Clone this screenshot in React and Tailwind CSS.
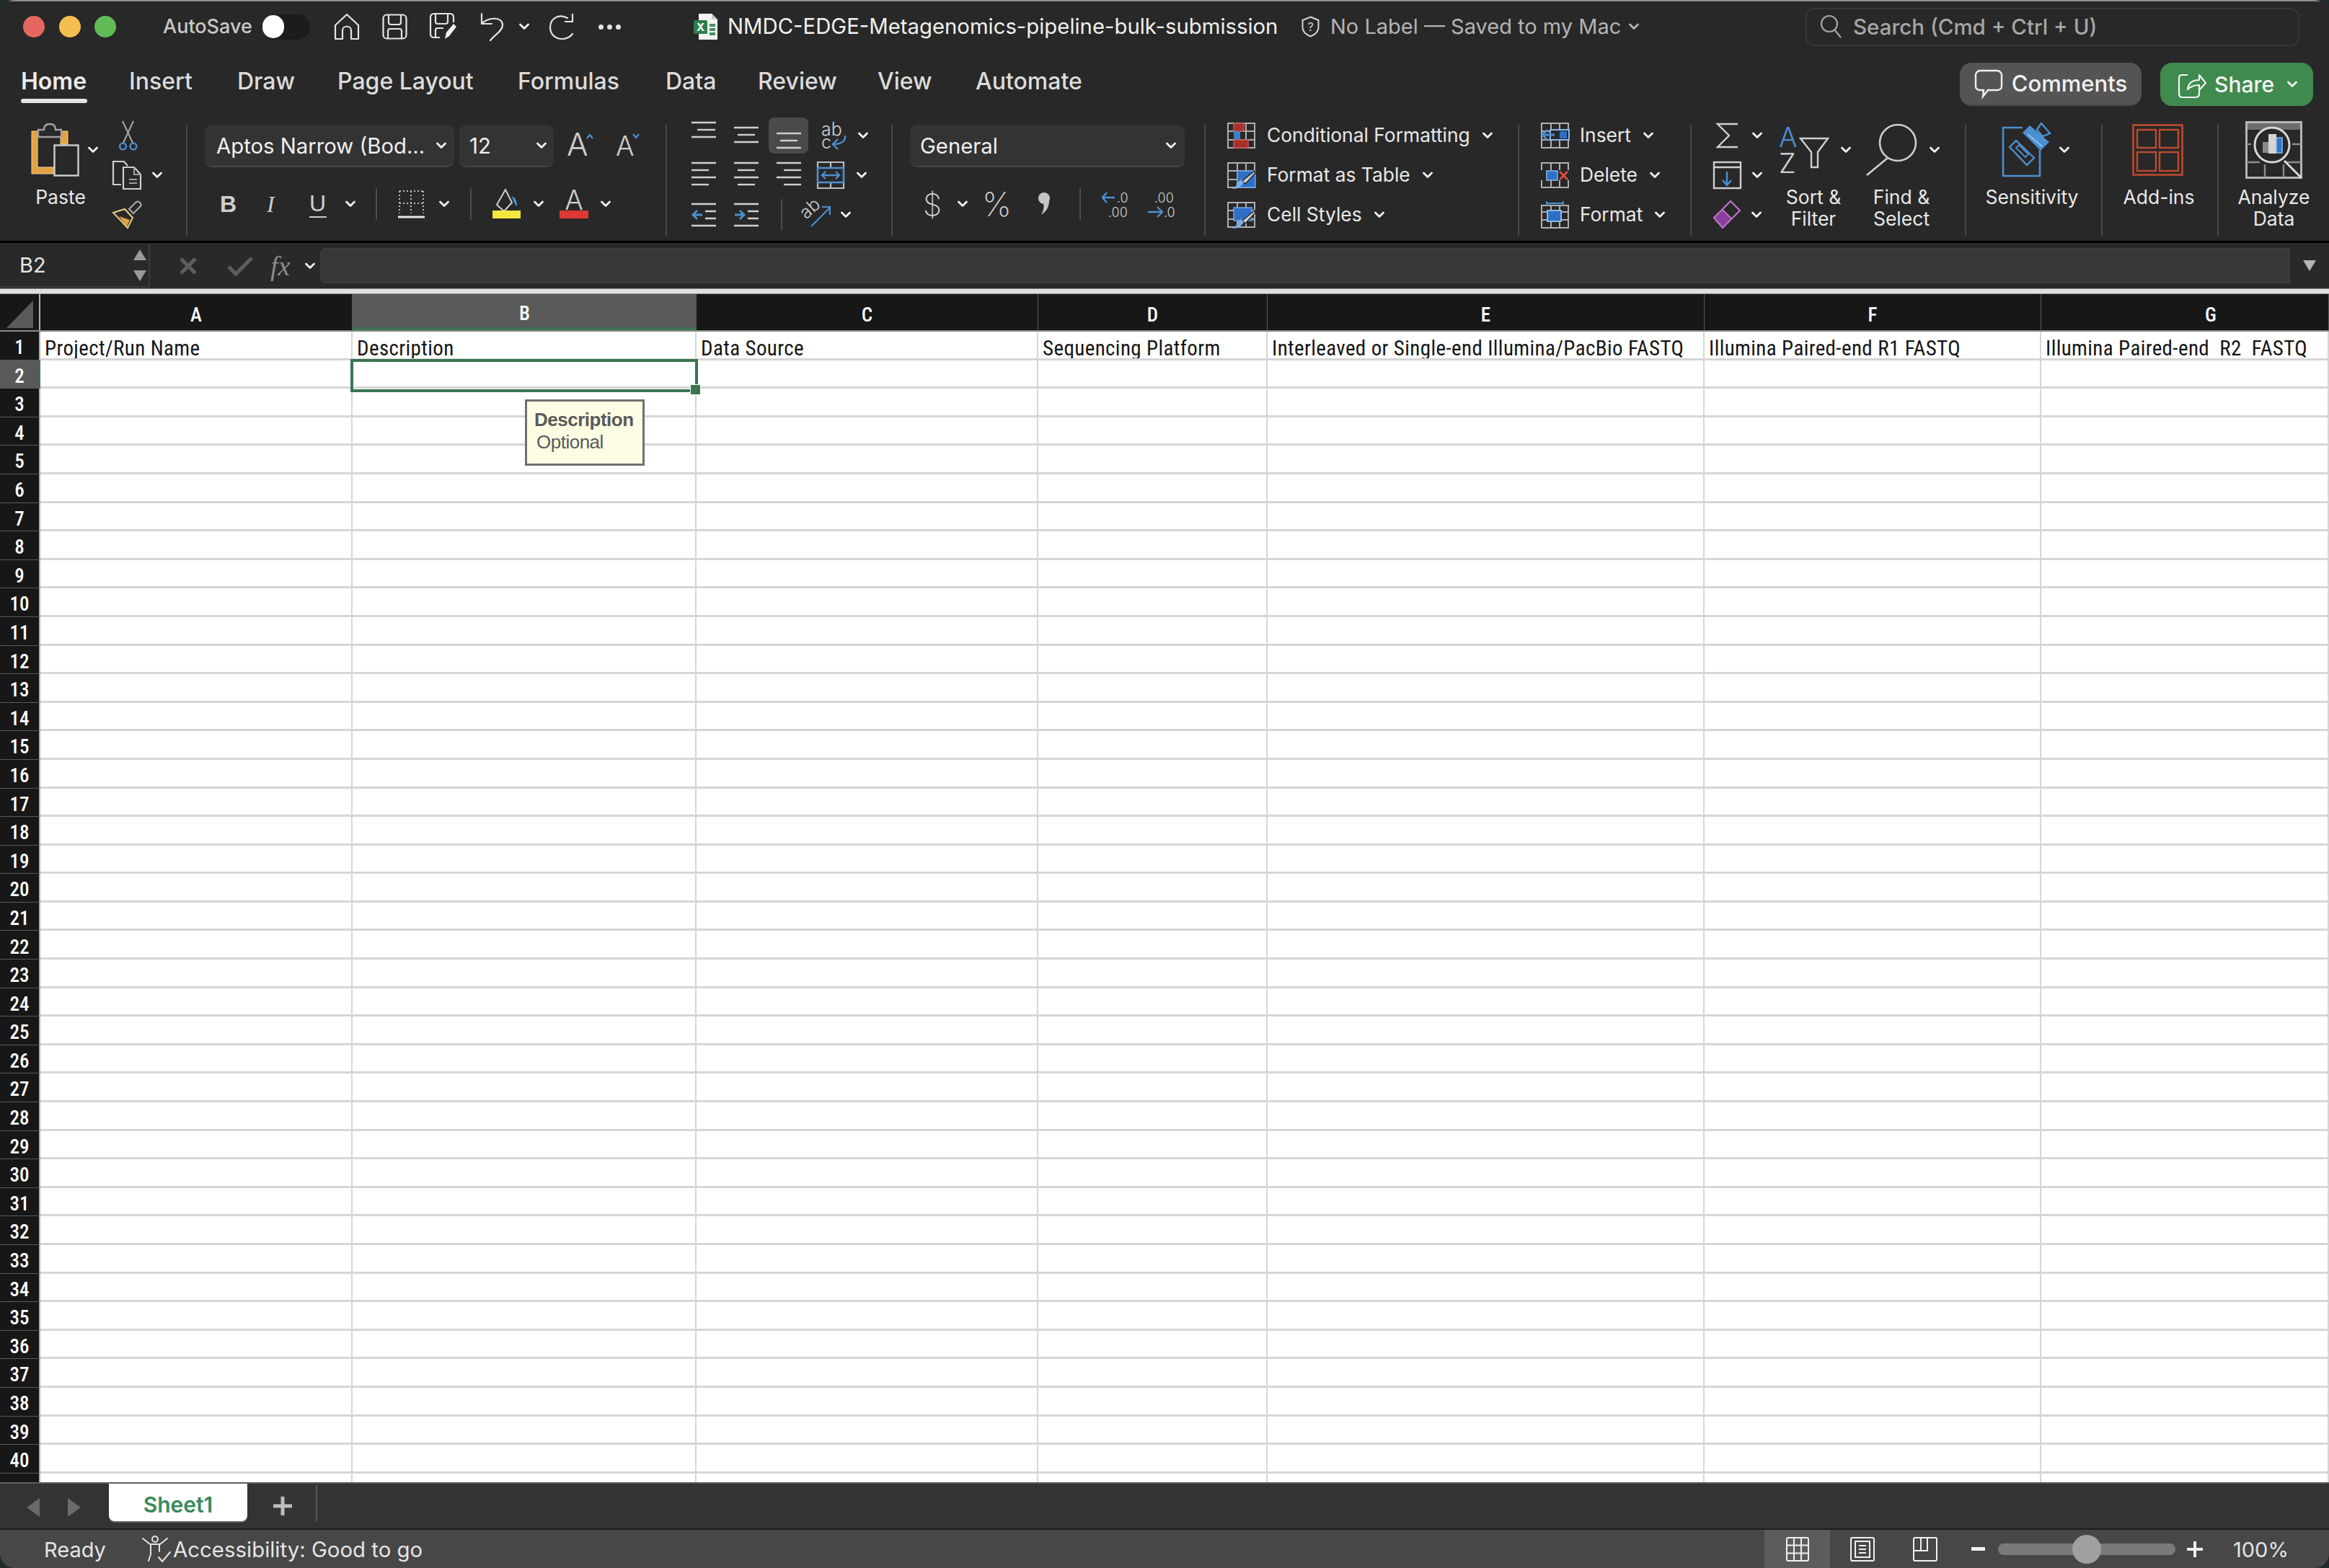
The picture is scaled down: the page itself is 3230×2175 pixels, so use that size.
import React from 'react';

const S = '#cfcfcf';
const G = '#b0b0b0';
const BLUE = '#4b8fd0';
const DARK = '#282828';

const ROWS = Array.from({ length: 41 }, (_, i) => i + 1);

const COLUMNS = [
  { name: 'A', width: 'w-[433px]', title: 'Project/Run Name' },
  { name: 'B', width: 'w-[477px]', title: 'Description' },
  { name: 'C', width: 'w-[474px]', title: 'Data Source' },
  { name: 'D', width: 'w-[318px]', title: 'Sequencing Platform' },
  { name: 'E', width: 'w-[606px]', title: 'Interleaved or Single-end Illumina/PacBio FASTQ' },
  { name: 'F', width: 'w-[467px]', title: 'Illumina Paired-end R1 FASTQ' },
  { name: 'G', width: 'w-[399px]', title: 'Illumina Paired-end  R2  FASTQ' },
];

const Chev = ({ className = '', color = '#f0f0f0' }) => (
  <svg width="14" height="10" viewBox="0 0 14 10" fill="none" className={`shrink-0 ${className}`}>
    <path d="M1.500 2L7 7.500 12.500 2" stroke={color} strokeWidth="2.800" strokeLinecap="round" strokeLinejoin="round" />
  </svg>
);

const Icon = ({ w, h, className = '', children }) => (
  <svg width={w} height={h} viewBox={`0 0 ${w} ${h}`} fill="none" className={`shrink-0 overflow-visible ${className}`}>
    {children}
  </svg>
);

const Sep = () => <div className="w-[2px] h-[154px] mt-[13px] bg-[#484848] shrink-0" />;
const MiniSep = ({ className = '' }) => <div className={`w-[2px] h-[44px] bg-[#4c4c4c] shrink-0 ${className}`} />;

const Row = ({ className = '', children }) => <div className={`flex items-center h-[55px] ${className}`}>{children}</div>;

const Lines = ({ rows }) => (
  <Icon w={34} h={44}>
    {rows.map(([x1, x2, y], i) => (
      <path key={i} d={`M${x1} ${y}H${x2}`} stroke={S} strokeWidth="2.400" />
    ))}
  </Icon>
);

const Dropdown = ({ label, className, chevClass }) => (
  <div className={`flex items-center h-[59px] rounded-[10px] bg-[#333333] border-b-2 border-[#454545] shrink-0 ${className}`}>
    <span className="pt-[3px] text-[29.300px] text-[#f0f0f0] whitespace-nowrap">{label}</span>
    <Chev className={chevClass} />
  </div>
);

const Stack = ({ topClass = '', label, labelClass = '', children }) => (
  <div className="flex flex-col">
    <div className={`flex items-center h-[79px] mt-[8px] ${topClass}`}>{children}</div>
    <div className={`mt-[11px] text-[26.500px] leading-[30px] text-center text-[#e8e8e8] ${labelClass}`}>{label}</div>
  </div>
);

const CellGrid = () => (
  <path d="M1 2h37v34H1zM14 2v34M26 2v34M1 13h37M1 25h37" stroke={G} strokeWidth="2" />
);

const BrushTip = () => (
  <>
    <path d="M38 13L21 27l4 4L39 16z" fill="#d2d2d2" stroke={DARK} strokeWidth="1.500" />
    <path d="M7 38c5 0 9-1 12-4 2-2 3-3 4-5l-4-4c-2 1-4 3-5 5-1 3-3 6-7 8z" fill="#79aee6" />
  </>
);

const PasteIcon = () => (
  <Icon w={66} h={74}>
    <path d="M1 11h11v7H9v43h24v9H1z" fill="#e2a244" stroke="#f3d391" strokeWidth="1" />
    <path d="M41 11h10v18H41z" fill="#e2a244" stroke="#f3d391" strokeWidth="1" />
    <path d="M10 19V9h8c0-5 3-8 8-8s8 3 8 8h8v10z" stroke="#a0a0a0" strokeWidth="2.400" fill={DARK} />
    <rect x="32.500" y="30.500" width="33" height="42" stroke={S} strokeWidth="2.400" fill={DARK} />
  </Icon>
);

const ScissorsIcon = () => (
  <Icon w={26} h={42}>
    <path d="M5 1l14 30M20 1L6 31" stroke="#a8a8a8" strokeWidth="2" />
    <circle cx="5.500" cy="36" r="4.400" stroke={BLUE} strokeWidth="2.400" />
    <circle cx="20" cy="36" r="4.400" stroke={BLUE} strokeWidth="2.400" />
  </Icon>
);

const CopyIcon = () => (
  <Icon w={40} h={40}>
    <path d="M12 33H1V1h15l5 6" stroke={S} strokeWidth="2.200" />
    <path d="M15 9h15l9 10v20H15z" stroke={S} strokeWidth="2.200" fill={DARK} />
    <path d="M30 9v10h9M23 26h11M23 31h11" stroke="#a0a0a0" strokeWidth="2" />
  </Icon>
);

const BrushIcon = () => (
  <Icon w={40} h={38}>
    <path d="M23 11l9-9c2-2 4-2 6 0s2 4 0 6l-9 9z" stroke="#a8a8a8" strokeWidth="2.200" />
    <path d="M1 16l16-5 11 12-7 14z" stroke="#e8cd7e" strokeWidth="2" />
    <path d="M9 21l15 5-4 9z" fill="#e2a244" />
  </Icon>
);

const HomeIcon = () => (
  <Icon w={36} h={38}>
    <path d="M2 17L18 2l16 15v19H24V24c0-7-12-7-12 0v12H2z" stroke="#e4e4e4" strokeWidth="2.200" strokeLinejoin="round" />
  </Icon>
);

const SaveIcon = () => (
  <Icon w={35} h={36}>
    <rect x="1.500" y="1.500" width="32" height="33" rx="5" stroke="#e4e4e4" strokeWidth="2.200" />
    <path d="M9 2v10c0 2 1 3 3 3h11c2 0 3-1 3-3V2M8 34V24c0-2 1-3 3-3h13c2 0 3 1 3 3v10" stroke="#e4e4e4" strokeWidth="2.200" />
  </Icon>
);

const SaveAsIcon = () => (
  <Icon w={38} h={38}>
    <path d="M14 34H6c-3 0-5-2-5-5V6c0-3 2-5 5-5h22c3 0 5 2 5 5v7" stroke="#e4e4e4" strokeWidth="2.200" />
    <path d="M8 2v10c0 2 1 3 3 3h11c2 0 3-1 3-3V2M8 34V24c0-2 1-3 3-3h8" stroke="#e4e4e4" strokeWidth="2.200" />
    <path d="M21 36l2-9 10-12 4 4-10 13z" fill="#f0f0f0" />
  </Icon>
);

const UndoIcon = () => (
  <Icon w={34} h={40}>
    <path d="M3 2v14h14M3 16C10 7 32 5 32 18c0 8-11 13-17 21" stroke="#e4e4e4" strokeWidth="2.200" strokeLinecap="round" strokeLinejoin="round" />
  </Icon>
);

const RedoIcon = () => (
  <Icon w={36} h={38}>
    <path d="M26 7C14 0 2 8 2 20c0 11 9 16 16 16 6 0 12-3 15-7" stroke="#e4e4e4" strokeWidth="2.200" strokeLinecap="round" />
    <path d="M33 1v11H22" stroke="#e4e4e4" strokeWidth="2.200" />
  </Icon>
);

const ExcelIcon = () => (
  <Icon w={34} h={38}>
    <path d="M7 1h18l8 8v28H7z" fill="#f4f4f4" />
    <path d="M25 1v8h8" fill="#c8c8c8" />
    <path d="M22 15h8v4h-8zM22 21h8v4h-8zM22 27h8v4h-8z" fill="#4b8e5e" />
    <rect x="0" y="10" width="19" height="19" rx="2" fill="#2f7d4c" />
    <text x="9.500" y="25" textAnchor="middle" fontSize="15" fontWeight="700" fill="#fff">X</text>
  </Icon>
);

const ShieldIcon = () => (
  <Icon w={25} h={30}>
    <path d="M12.500 1.500L23.500 6v10c0 6-5 10-11 12.500C6.500 26 1.500 22 1.500 16V6z" stroke="#d6d6d6" strokeWidth="2" />
    <text x="12.500" y="21" textAnchor="middle" fontSize="16" fill="#d6d6d6">?</text>
  </Icon>
);

const SearchIcon = () => (
  <Icon w={32} h={34}>
    <circle cx="13" cy="13" r="11" stroke="#a6a6a6" strokeWidth="2.200" />
    <path d="M20 21l9 11" stroke="#a6a6a6" strokeWidth="2.200" />
  </Icon>
);

const CommentIcon = () => (
  <Icon w={40} h={40}>
    <path d="M8 2h24c3 0 6 3 6 6v16c0 3-3 5-6 5H19l-7 9 1-9H8c-3 0-6-2-6-5V8c0-3 3-6 6-6z" stroke="#f0f0f0" strokeWidth="2.400" />
  </Icon>
);

const ShareIcon = () => (
  <Icon w={40} h={40}>
    <path d="M14 7H6C3 7 2 9 2 11v22c0 3 2 5 5 5h18c3 0 5-2 5-5v-7" stroke="#f4f4f4" strokeWidth="2.200" />
    <path d="M14 27c1-9 7-13 16-13V7l9 11-9 10v-7c-7 0-12 2-16 6z" stroke="#f4f4f4" strokeWidth="2.200" strokeLinejoin="round" />
  </Icon>
);

const BigA = ({ size, w, children }) => (
  <Icon w={w} h={34}>
    <text x="0" y="33" fontSize={size} fontWeight="300" fill={S}>A</text>
    {children}
  </Icon>
);

const BordersIcon = () => (
  <Icon w={37} h={40}>
    <path d="M2 2h33M2 19h33" stroke="#bdbdbd" strokeWidth="2" strokeDasharray="2 3" />
    <path d="M2 2v31M18 2v31M35 2v31" stroke="#bdbdbd" strokeWidth="2" strokeDasharray="2 3" />
    <path d="M0 38h37" stroke="#e8e8e8" strokeWidth="3" />
  </Icon>
);

const FillIcon = () => (
  <Icon w={39} h={42}>
    <path d="M18 1l-12 21 10 9 11-12z" stroke={S} strokeWidth="2" />
    <path d="M27 10c5 2 7 7 7 14-3-2-5-6-7-14z" fill={BLUE} />
    <rect x="0" y="30" width="39" height="11" fill="#f2e63f" />
  </Icon>
);

const FontColorIcon = () => (
  <Icon w={40} h={42}>
    <text x="20" y="29" textAnchor="middle" fontSize="38" fontWeight="300" fill={S}>A</text>
    <rect x="0" y="30" width="40" height="11" fill="#dc3a32" />
  </Icon>
);

const WrapIcon = () => (
  <Icon w={36} h={42}>
    <text x="0" y="21" fontSize="25" fontWeight="300" fill={S}>ab</text>
    <text x="0" y="39" fontSize="25" fontWeight="300" fill={S}>c</text>
    <path d="M33 21c1 7-4 12-17 12M23 26l-7 7 7 7" stroke={BLUE} strokeWidth="2.400" />
  </Icon>
);

const MergeIcon = () => (
  <Icon w={38} h={38}>
    <path d="M1 1h36v36H1zM19 1v8M19 29v8" stroke="#bdbdbd" strokeWidth="2.200" />
    <path d="M1 9h36v20H1z" stroke={BLUE} strokeWidth="2.400" />
    <path d="M7 19h24M12 14l-5 5 5 5M26 14l5 5-5 5" stroke={BLUE} strokeWidth="2.400" />
  </Icon>
);

const IndentIcon = ({ flip }) => (
  <Icon w={34} h={34}>
    <path d="M0 2h34M0 32h34M19 12h15M19 22h15" stroke={S} strokeWidth="2.400" />
    {flip ? (
      <path d="M1 17h13M8 11l6 6-6 6" stroke={BLUE} strokeWidth="2.800" />
    ) : (
      <path d="M15 17H2M8 11l-6 6 6 6" stroke={BLUE} strokeWidth="2.800" />
    )}
  </Icon>
);

const OrientationIcon = () => (
  <Icon w={41} h={38}>
    <text x="0" y="0" transform="translate(7 26) rotate(-42)" fontSize="25" fontWeight="300" fill={S}>ab</text>
    <path d="M14 35L40 9M29 8h11v11" stroke={BLUE} strokeWidth="2.200" />
  </Icon>
);

const CommaIcon = () => (
  <Icon w={17} h={34}>
    <circle cx="8" cy="9" r="8" fill="#c6c6c6" />
    <path d="M15 9c1 10-3 18-11 23 4-7 4-12 3-16z" fill="#c6c6c6" />
  </Icon>
);

const DecimalIcon = ({ inc }) => (
  <Icon w={39} h={40}>
    {inc ? (
      <>
        <text x="22" y="18" fontSize="18" fontWeight="300" fill={S}>.0</text>
        <text x="10" y="38" fontSize="18" fontWeight="300" fill={S}>.00</text>
        <path d="M19 11H2M8 4l-6 7 6 7" stroke={BLUE} strokeWidth="2.400" />
      </>
    ) : (
      <>
        <text x="10" y="18" fontSize="18" fontWeight="300" fill={S}>.00</text>
        <text x="23" y="38" fontSize="18" fontWeight="300" fill={S}>.0</text>
        <path d="M1 31h19M14 24l7 7-7 7" stroke={BLUE} strokeWidth="2.400" />
      </>
    )}
  </Icon>
);

const SigmaIcon = () => (
  <Icon w={39} h={38}>
    <path d="M34 3H6l16 16L6 35h28" stroke={S} strokeWidth="2.400" />
  </Icon>
);

const FillDownIcon = () => (
  <Icon w={39} h={38}>
    <rect x="1" y="1" width="37" height="36" stroke={S} strokeWidth="2.400" />
    <path d="M1 8h37" stroke={S} strokeWidth="2.400" />
    <path d="M19 14v18M13 26l6 7 6-7" stroke={BLUE} strokeWidth="2.400" />
  </Icon>
);

const EraserIcon = () => (
  <Icon w={38} h={40}>
    <path d="M1 24L12 12l13 13-12 13z" fill="#8a3f9a" />
    <path d="M24 1l13 13-24 24L1 24z" stroke="#b96fc6" strokeWidth="2.400" strokeLinejoin="round" />
    <path d="M12 12l13 13" stroke="#b96fc6" strokeWidth="2" />
  </Icon>
);

const SortIcon = () => (
  <Icon w={69} h={66}>
    <text x="0" y="29" fontSize="38" fontWeight="300" fill={BLUE}>A</text>
    <text x="0" y="65" fontSize="38" fontWeight="300" fill={S}>Z</text>
    <path d="M30 17h38L54 36v21h-9V36z" stroke={S} strokeWidth="2.400" />
  </Icon>
);

const FindIcon = () => (
  <Icon w={73} h={74}>
    <circle cx="45" cy="27" r="25" stroke={S} strokeWidth="2.600" />
    <path d="M31 48L2 72" stroke={S} strokeWidth="2.600" />
  </Icon>
);

const SensitivityIcon = () => (
  <Icon w={67} h={75}>
    <path d="M28 7H1v67h51V38" stroke={BLUE} strokeWidth="2.600" />
    <path d="M10 34l9-9 25 24-10 10z" stroke={BLUE} strokeWidth="2.400" fill={DARK} />
    <path d="M19 35l4-4 13 13-4 4z" stroke={BLUE} strokeWidth="1.800" />
    <path d="M28 14L38 4l27 23-12 12z" fill={BLUE} />
    <path d="M35 16l20 17" stroke="#8fc0ee" strokeWidth="2" />
    <path d="M48 10l6-9 12 14-10 4z" stroke={BLUE} strokeWidth="2.400" fill={DARK} />
  </Icon>
);

const AddInsIcon = () => (
  <Icon w={71} h={72}>
    <rect x="1.500" y="1.500" width="68" height="69" stroke="#bf4a30" strokeWidth="2.600" />
    <rect x="7" y="8" width="26" height="25" stroke="#bf4a30" strokeWidth="2.400" />
    <rect x="38" y="8" width="26" height="25" stroke="#bf4a30" strokeWidth="2.400" />
    <rect x="7" y="39" width="26" height="26" stroke="#bf4a30" strokeWidth="2.400" />
    <rect x="38" y="39" width="26" height="26" stroke="#bf4a30" strokeWidth="2.400" />
  </Icon>
);

const AnalyzeIcon = () => (
  <Icon w={79} h={80}>
    <rect x="1.500" y="1.500" width="76" height="77" stroke="#b5b5b5" strokeWidth="3" />
    <rect x="3" y="3" width="73" height="9" fill="#6d6d6d" />
    <path d="M2 32h6M65 32h12M2 57h18M54 57h23M27 60v18M53 60v18" stroke="#8c8c8c" strokeWidth="2.400" />
    <circle cx="37" cy="33" r="24" stroke="#d8d8d8" strokeWidth="3" fill={DARK} />
    <rect x="24" y="29" width="8" height="15" fill="#8a8a8a" />
    <rect x="32" y="18" width="11" height="27" fill="#d4d4d4" />
    <rect x="43" y="23" width="8" height="21" fill="#2f77c9" stroke="#8cb8e8" strokeWidth="1.500" />
    <path d="M54 55l24 24" stroke="#d8d8d8" strokeWidth="3" />
  </Icon>
);

const TitleBar = () => (
  <div className="flex items-center h-[72px] shrink-0 border-t-2 border-[#8c8c8c]">
    <div className="w-[30px] h-[30px] ml-[32px] rounded-full bg-[#e5675f]" />
    <div className="w-[30px] h-[30px] ml-[20px] rounded-full bg-[#f5bf4f]" />
    <div className="w-[30px] h-[30px] ml-[19px] rounded-full bg-[#62ba56]" />
    <div className="w-[138px] ml-[65px] text-[27px] font-medium text-[#c8c8c8] whitespace-nowrap">AutoSave</div>
    <div className="flex items-center w-[66px] h-[35px] rounded-full bg-[#1c1c1c]">
      <div className="w-[30px] h-[32px] rounded-full bg-white" />
    </div>
    <div className="ml-[33px] flex items-center"><HomeIcon /></div>
    <div className="ml-[31px] flex items-center"><SaveIcon /></div>
    <div className="ml-[31px] flex items-center"><SaveAsIcon /></div>
    <div className="ml-[31px] flex items-center"><UndoIcon /></div>
    <Chev className="ml-[21px]" />
    <div className="ml-[27px] flex items-center"><RedoIcon /></div>
    <div className="ml-[33px] flex gap-[5px]">
      <div className="w-[7px] h-[7px] rounded-full bg-[#e4e4e4]" />
      <div className="w-[7px] h-[7px] rounded-full bg-[#e4e4e4]" />
      <div className="w-[7px] h-[7px] rounded-full bg-[#e4e4e4]" />
    </div>
    <div className="ml-[101px]"><ExcelIcon /></div>
    <div className="w-[796px] ml-[13px] text-[29.300px] text-[#f0f0f0] whitespace-nowrap">NMDC-EDGE-Metagenomics-pipeline-bulk-submission</div>
    <ShieldIcon />
    <div className="w-[413px] ml-[15px] text-[29px] text-[#b4b4b4] whitespace-nowrap">No Label — Saved to my Mac</div>
    <Chev color="#b4b4b4" className="ml-[1px]" />
    <div className="flex items-center w-[685px] h-[53px] ml-[231px] pl-[18px] rounded-[12px] border-2 border-[#363636]">
      <SearchIcon />
      <span className="ml-[14px] text-[29.500px] font-medium text-[#a6a6a6] whitespace-nowrap">Search (Cmd + Ctrl + U)</span>
    </div>
  </div>
);

const TabBar = () => (
  <div className="flex items-start h-[78px] shrink-0 pl-[29px]">
    <div className="w-[150px] flex flex-col items-start mt-[22px]">
      <span className="text-[32px] leading-[38px] font-semibold text-[#ececec]">Home</span>
      <div className="w-[92px] h-[6px] mt-[5px] rounded-full bg-[#e4e4e4]" />
    </div>
    {[
      ['Insert', 'w-[150px]'],
      ['Draw', 'w-[139px]'],
      ['Page Layout', 'w-[250px]'],
      ['Formulas', 'w-[205px]'],
      ['Data', 'w-[128px]'],
      ['Review', 'w-[166px]'],
      ['View', 'w-[136px]'],
      ['Automate', 'w-[170px]'],
    ].map(([tab, width]) => (
      <span key={tab} className={`${width} mt-[22px] text-[32px] leading-[38px] font-medium text-[#dcdcdc] whitespace-nowrap`}>
        {tab}
      </span>
    ))}
    <div className="flex items-center justify-center gap-[12px] w-[252px] h-[60px] ml-auto mt-[15px] rounded-[16px] bg-[#545454] border-b-2 border-[#474747]">
      <CommentIcon />
      <span className="text-[31px] font-medium text-[#f0f0f0]">Comments</span>
    </div>
    <div className="flex items-center w-[212px] h-[60px] ml-[26px] mr-[22px] mt-[15px] pl-[24px] rounded-[16px] bg-[#3f8a4e]">
      <ShareIcon />
      <span className="ml-[11px] text-[30px] font-medium text-[#f6f6f6]">Share</span>
      <Chev className="ml-[18px]" color="#f0f0f0" />
    </div>
  </div>
);

const Ribbon = () => (
  <div className="flex items-start h-[174px] shrink-0 pt-[10px]">
    <div className="flex w-[258px] shrink-0">
      <div className="w-[156px]">
        <div className="flex items-center h-[79px] mt-[8px] pl-[43px]">
          <PasteIcon />
          <Chev className="ml-[13px]" />
        </div>
        <div className="ml-[34px] w-[100px] mt-[11px] text-[26.500px] leading-[30px] text-center text-[#e8e8e8]">Paste</div>
      </div>
      <div>
        <Row className="pl-[9px]"><ScissorsIcon /></Row>
        <Row><CopyIcon /><Chev className="ml-[15px]" /></Row>
        <Row><BrushIcon /></Row>
      </div>
    </div>
    <Sep />

    <div className="w-[663px] shrink-0 pt-[13px]">
      <div className="flex items-start h-[59px] pl-[24px]">
        <Dropdown label="Aptos Narrow (Bod..." className="w-[346px] pl-[16px]" chevClass="ml-auto mr-[11px]" />
        <Dropdown label="12" className="w-[131px] ml-[7px] pl-[14px]" chevClass="ml-auto mr-[10px]" />
        <div className="ml-[18px] mt-[10px]">
          <BigA size={44} w={37}>
            <path d="M28 9l4-5 4 5" stroke={BLUE} strokeWidth="2.200" />
          </BigA>
        </div>
        <div className="ml-[31px] mt-[10px]">
          <BigA size={38} w={34}>
            <path d="M24 3l4 5 4-5" stroke={BLUE} strokeWidth="2.200" />
          </BigA>
        </div>
      </div>
      <div className="flex items-center h-[102px] pl-[45px]">
        <span className="w-[22px] font-['Liberation_Sans',sans-serif] text-[32px] font-bold text-[#cfcfcf]">B</span>
        <span className="w-[16px] ml-[43px] font-['Liberation_Serif',serif] italic text-[32px] text-[#cfcfcf]">I</span>
        <span className="w-[24px] ml-[43px] font-['Liberation_Sans',sans-serif] text-[32px] leading-[36px] text-[#cfcfcf] border-b-2 border-[#cfcfcf]">U</span>
        <Chev className="ml-[26px]" />
        <MiniSep className="ml-[28px]" />
        <div className="ml-[29px]"><BordersIcon /></div>
        <Chev className="ml-[20px]" />
        <MiniSep className="ml-[29px]" />
        <div className="ml-[29px]"><FillIcon /></div>
        <Chev className="ml-[18px]" />
        <div className="ml-[22px]"><FontColorIcon /></div>
        <Chev className="ml-[17px]" />
      </div>
    </div>
    <Sep />

    <div className="w-[311px] shrink-0">
      <Row className="pl-[34px]">
        <Lines rows={[[0, 34, 4], [8, 33, 14], [0, 34, 24]]} />
        <div className="ml-[25px]"><Lines rows={[[0, 34, 11], [5, 29, 21], [0, 34, 31]]} /></div>
        <div className="flex items-center justify-center w-[55px] h-[50px] ml-[14px] rounded-[8px] bg-[#4a4a4a]">
          <Lines rows={[[0, 34, 19], [5, 29, 29], [0, 34, 39]]} />
        </div>
        <div className="ml-[18px]"><WrapIcon /></div>
        <Chev className="ml-[15px]" />
      </Row>
      <Row className="pl-[34px]">
        <Lines rows={[[0, 34, 5], [0, 24, 15], [0, 34, 25], [0, 24, 35]]} />
        <div className="ml-[25px]"><Lines rows={[[0, 34, 5], [5, 29, 15], [0, 34, 25], [5, 29, 35]]} /></div>
        <div className="ml-[25px]"><Lines rows={[[0, 34, 5], [10, 34, 15], [0, 34, 25], [10, 34, 35]]} /></div>
        <div className="ml-[22px]"><MergeIcon /></div>
        <Chev className="ml-[17px]" />
      </Row>
      <Row className="pl-[34px]">
        <IndentIcon />
        <div className="ml-[25px]"><IndentIcon flip /></div>
        <MiniSep className="ml-[31px]" />
        <div className="ml-[26px]"><OrientationIcon /></div>
        <Chev className="ml-[14px]" />
      </Row>
    </div>
    <Sep />

    <div className="w-[432px] shrink-0 pt-[13px]">
      <div className="h-[59px] pl-[24px]">
        <Dropdown label="General" className="w-[381px] pl-[14px]" chevClass="ml-auto mr-[12px]" />
      </div>
      <div className="flex items-center h-[102px] pl-[42px]">
        <span className="w-[26px] text-[42px] font-extralight text-[#cfcfcf]">$</span>
        <Chev className="ml-[22px]" />
        <span className="w-[40px] ml-[20px] text-[46px] font-extralight text-[#cfcfcf] whitespace-nowrap">%</span>
        <div className="ml-[38px]"><CommaIcon /></div>
        <MiniSep className="ml-[40px]" />
        <div className="ml-[28px]"><DecimalIcon inc /></div>
        <div className="ml-[25px]"><DecimalIcon /></div>
      </div>
    </div>
    <Sep />

    <div className="w-[433px] shrink-0 pl-[30px]">
      <Row>
        <Icon w={39} h={38}>
          <CellGrid />
          <rect x="9" y="2" width="14" height="11" fill="#a82f2a" stroke="#c75b52" strokeWidth="1.500" />
          <rect x="9" y="13" width="9" height="12" fill="#3d82c8" />
          <rect x="9" y="25" width="20" height="11" fill="#a82f2a" stroke="#c75b52" strokeWidth="1.500" />
        </Icon>
        <span className="ml-[16px] text-[26.400px] text-[#e8e8e8] whitespace-nowrap">Conditional Formatting</span>
        <Chev className="ml-[17px]" />
      </Row>
      <Row>
        <Icon w={39} h={38}>
          <CellGrid />
          <rect x="14" y="13" width="25" height="23" fill="#2f6fc4" stroke="#6ea6e2" strokeWidth="1.500" />
          <BrushTip />
        </Icon>
        <span className="ml-[16px] text-[26.400px] text-[#e8e8e8] whitespace-nowrap">Format as Table</span>
        <Chev className="ml-[17px]" />
      </Row>
      <Row>
        <Icon w={39} h={38}>
          <CellGrid />
          <rect x="9" y="9" width="25" height="18" fill="#2f6fc4" stroke="#6ea6e2" strokeWidth="1.500" />
          <BrushTip />
        </Icon>
        <span className="ml-[16px] text-[26.400px] text-[#e8e8e8] whitespace-nowrap">Cell Styles</span>
        <Chev className="ml-[17px]" />
      </Row>
    </div>
    <Sep />

    <div className="w-[237px] shrink-0 pl-[30px]">
      <Row>
        <Icon w={39} h={38}>
          <CellGrid />
          <rect x="13" y="11" width="26" height="14" fill={DARK} stroke="#8cb8e8" strokeWidth="2" />
          <rect x="26" y="13" width="10" height="10" fill="#2d6fc4" />
          <path d="M19 18H2M9 11l-7 7 7 7" stroke={BLUE} strokeWidth="2.800" />
        </Icon>
        <span className="ml-[15px] text-[26.400px] text-[#e8e8e8]">Insert</span>
        <Chev className="ml-[17px]" />
      </Row>
      <Row>
        <Icon w={39} h={38}>
          <CellGrid />
          <rect x="0" y="12" width="39" height="14" fill={DARK} />
          <rect x="8" y="13" width="15" height="13" fill="#2d6fc4" stroke="#8cb8e8" strokeWidth="1.500" />
          <path d="M26 14l11 11M37 14L26 25" stroke="#e0503f" strokeWidth="2.600" />
        </Icon>
        <span className="ml-[15px] text-[26.400px] text-[#e8e8e8]">Delete</span>
        <Chev className="ml-[17px]" />
      </Row>
      <Row>
        <Icon w={39} h={38}>
          <path d="M1 6h37v31H1zM14 6v31M26 6v31M1 15h37M1 26h37" stroke={G} strokeWidth="2" />
          <path d="M8 3h23M8 0v6M31 0v6" stroke={BLUE} strokeWidth="2" />
          <rect x="9" y="13" width="19" height="15" fill="#2d6fc4" stroke="#8cb8e8" strokeWidth="2" />
        </Icon>
        <span className="ml-[15px] text-[26.400px] text-[#e8e8e8]">Format</span>
        <Chev className="ml-[17px]" />
      </Row>
    </div>
    <Sep />

    <div className="flex w-[379px] shrink-0">
      <div className="w-[121px] pl-[30px]">
        <Row><SigmaIcon /><Chev className="ml-[15px]" /></Row>
        <Row><FillDownIcon /><Chev className="ml-[15px]" /></Row>
        <Row><EraserIcon /><Chev className="ml-[15px]" /></Row>
      </div>
      <div className="w-[120px]">
        <Stack label={<>Sort &amp;<br />Filter</>} labelClass="w-[96px]">
          <SortIcon />
          <Chev className="ml-[17px]" />
        </Stack>
      </div>
      <div className="w-[138px]">
        <Stack label={<>Find &amp;<br />Select</>} labelClass="w-[100px]">
          <FindIcon />
          <Chev className="ml-[16px]" />
        </Stack>
      </div>
    </div>
    <Sep />

    <div className="w-[187px] shrink-0">
      <Stack label="Sensitivity" labelClass="w-[182px]" topClass="pl-[50px]">
        <SensitivityIcon />
        <Chev className="ml-[12px]" />
      </Stack>
    </div>
    <Sep />

    <div className="w-[159px] shrink-0">
      <Stack label="Add-ins" labelClass="w-[156px]" topClass="pl-[41px]">
        <AddInsIcon />
      </Stack>
    </div>
    <Sep />

    <div className="w-[153px] shrink-0">
      <Stack label={<>Analyze<br />Data</>} labelClass="w-[153px]" topClass="pl-[37px]">
        <AnalyzeIcon />
      </Stack>
    </div>
  </div>
);

const FormulaBar = () => (
  <div className="flex items-center h-[66px] shrink-0 border-t-[3px] border-black bg-[#292929]">
    <div className="flex items-center w-[208px] h-[60px] pl-[27px] pr-[3px] border-r-2 border-b-2 border-[#3c3c3c] shrink-0">
      <span className="text-[29px] text-[#e6e6e6]">B2</span>
      <div className="ml-auto flex flex-col gap-[14px]">
        <Icon w={18} h={15}><path d="M9 0l9 15H0z" fill="#9a9a9a" /></Icon>
        <Icon w={18} h={15}><path d="M9 15L0 0h18z" fill="#9a9a9a" /></Icon>
      </div>
    </div>
    <Icon w={26} h={24} className="ml-[40px]">
      <path d="M3 2l20 20M23 2L3 22" stroke="#5e5e5e" strokeWidth="5" />
    </Icon>
    <Icon w={36} h={26} className="ml-[41px]">
      <path d="M2 14l10 10L34 2" stroke="#5e5e5e" strokeWidth="5" />
    </Icon>
    <span className="w-[35px] ml-[24px] font-['Liberation_Serif',serif] italic text-[38px] leading-none text-[#8c8c8c]">fx</span>
    <Chev className="ml-[13px]" />
    <div className="flex-1 h-[49px] ml-[7px] rounded-l-[8px] bg-[#383838] border border-[#414141]" />
    <div className="flex items-center justify-center w-[54px] h-[49px] bg-[#292929]">
      <Icon w={18} h={15}><path d="M9 15L0 0h18z" fill="#b4b4b4" /></Icon>
    </div>
  </div>
);

const Sheet = () => (
  <div className="relative flex-1 min-h-0 overflow-hidden bg-white font-['Liberation_Sans_Narrow','Roboto_Condensed','Liberation_Sans',sans-serif]">
    <div className="flex h-[52px] bg-[#171717] border-b-2 border-[#8a8a8a]">
      <div className="flex items-end justify-center w-[56px] border-r-2 border-[#b0b0b0] pb-[3px] shrink-0">
        <Icon w={37} h={38}><path d="M37 0v38H0z" fill="#5a5a5a" /></Icon>
      </div>
      {COLUMNS.map((col) => (
        <div
          key={col.name}
          className={`flex items-center justify-center ${col.width} shrink-0 pt-[8px] text-[27px] font-medium text-white ${
            col.name === 'B' ? 'bg-[#595959] border-b-4 border-[#3a7450]' : 'border-r border-[#5a5a5a]'
          } ${col.name === 'G' ? 'pl-[72px]' : ''}`}
        >
          {col.name}
        </div>
      ))}
    </div>
    {ROWS.map((row) => (
      <div key={row} className="flex h-[39.600px]">
        <div
          className={`flex items-center justify-center w-[56px] shrink-0 pt-[6px] text-[27px] font-medium text-white border-b border-[#5a5a5a] border-r-2 ${
            row === 2 ? 'bg-[#595959] border-r-[#3a7450]' : 'bg-[#171717] border-r-[#b0b0b0]'
          }`}
        >
          {row < 41 ? row : ''}
        </div>
        {COLUMNS.map((col) => (
          <div
            key={col.name}
            className={`${col.width} shrink-0 pl-[6px] text-[29px] leading-[47px] tracking-[0.380px] text-[#151515] whitespace-pre overflow-hidden border-r-2 border-b-[3px] border-[#d6d6d6]`}
          >
            {row === 1 ? col.title : ''}
          </div>
        ))}
      </div>
    ))}
    <div className="absolute left-[486px] top-[90px] w-[482px] h-[46px] border-[4px] border-[#3a7450]" />
    <div className="absolute left-[957px] top-[125px] w-[15px] h-[15px] bg-[#3a7450] border border-white" />
    <div className="absolute left-[728px] top-[146px] w-[166px] h-[92px] pl-[10px] pt-[9px] bg-[#fdfde4] border-[3px] border-[#707070] text-[#5a5a5a] font-['Liberation_Sans',sans-serif]">
      <div className="text-[26px] leading-[32px] font-bold tracking-[-0.500px]">Description</div>
      <div className="ml-[3px] text-[26px] leading-[30px] tracking-[-0.500px]">Optional</div>
    </div>
  </div>
);

const SheetTabs = () => (
  <div className="flex items-start h-[64px] shrink-0 bg-[#333333] border-t-2 border-[#5e5e5e]">
    <Icon w={18} h={26} className="ml-[37px] mt-[20px]"><path d="M18 0v26L0 13z" fill="#6a6a6a" /></Icon>
    <Icon w={18} h={26} className="ml-[39px] mt-[20px]"><path d="M0 0v26l18-13z" fill="#6a6a6a" /></Icon>
    <div className="flex items-center justify-center w-[192px] h-[52px] ml-[39px] pt-[6px] rounded-b-[8px] bg-white text-[30px] font-semibold text-[#3a8a5c] shadow-[0_2px_0_#666666]">
      Sheet1
    </div>
    <Icon w={26} h={26} className="ml-[36px] mt-[18px]"><path d="M13 0v26M0 13h26" stroke="#bdbdbd" strokeWidth="5" /></Icon>
    <div className="w-[2px] h-[50px] ml-[33px] mt-[2px] bg-[#585858]" />
  </div>
);

const StatusBar = () => (
  <div className="flex items-center h-[55px] shrink-0 bg-[#474747] border-t-2 border-[#1e1e1e]">
    <span className="w-[134px] ml-[61px] pt-[3px] text-[29px] text-[#e4e4e4]">Ready</span>
    <Icon w={42} h={38}>
      <circle cx="20" cy="5" r="4" stroke="#e4e4e4" strokeWidth="2" />
      <path d="M3 4l10 8h14l10-8M14 12v14l-3 9M26 12v10M25 30l5 6 11-13" stroke="#e4e4e4" strokeWidth="2" strokeLinecap="round" />
    </Icon>
    <span className="ml-[3px] pt-[3px] text-[29.400px] text-[#e4e4e4] whitespace-nowrap">Accessibility: Good to go</span>
    <div className="flex items-center justify-center w-[91px] h-full ml-auto bg-[#5c5c5c]">
      <Icon w={32} h={34}>
        <rect x="1" y="1" width="30" height="32" rx="2" stroke="#f0f0f0" strokeWidth="2" />
        <path d="M11 1v32M21 1v32M1 11.500h30M1 22.500h30" stroke="#f0f0f0" strokeWidth="2" />
      </Icon>
    </div>
    <Icon w={34} h={34} className="ml-[28px]">
      <rect x="1" y="1" width="32" height="32" rx="2" stroke="#f0f0f0" strokeWidth="2" />
      <path d="M7 6h20v22H7zM12 12h10M12 17h10M12 22h10" stroke="#f0f0f0" strokeWidth="2" />
    </Icon>
    <Icon w={34} h={34} className="ml-[53px]">
      <rect x="1" y="1" width="32" height="32" rx="2" stroke="#f0f0f0" strokeWidth="2" />
      <path d="M1 19h19V1M11 1v18" stroke="#f0f0f0" strokeWidth="2" />
    </Icon>
    <div className="w-[19px] h-[5px] ml-[47px] bg-[#f0f0f0]" />
    <div className="relative w-[246px] h-[16px] ml-[18px] rounded-full bg-[#7a7a7a]">
      <div className="absolute left-[103px] top-[-12px] w-[40px] h-[40px] rounded-full bg-[#a0a0a0]" />
    </div>
    <Icon w={22} h={22} className="ml-[16px]"><path d="M11 0v22M0 11h22" stroke="#f0f0f0" strokeWidth="4" /></Icon>
    <span className="w-[76px] ml-[42px] mr-[57px] pt-[3px] text-[29px] text-[#e4e4e4] whitespace-nowrap">100%</span>
  </div>
);

export default function App() {
  return (
    <div className="w-[3230px] h-[2175px] bg-[#20292b]">
      <div className="flex flex-col w-full h-full overflow-hidden rounded-[20px] bg-[#282828] font-['Inter',sans-serif]">
        <TitleBar />
        <TabBar />
        <Ribbon />
        <div className="h-[10px] shrink-0" />
        <FormulaBar />
        <div className="h-[8px] shrink-0 bg-[#e0e0e0] border-y border-[#8c8c8c]" />
        <Sheet />
        <SheetTabs />
        <StatusBar />
      </div>
    </div>
  );
}
